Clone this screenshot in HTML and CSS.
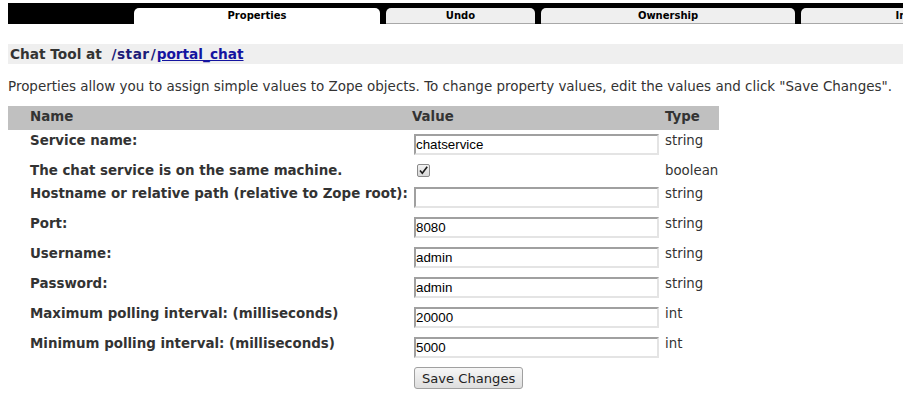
FILE: index.html
```html
<!DOCTYPE html>
<html>
<head>
<meta charset="utf-8">
<link rel="stylesheet" href="styles.css">
</head>
<body>
<div class="page">
  <div class="tabbar">
    <div class="tab tab-active tab-props">Properties</div>
    <div class="tab tab-undo">Undo</div>
    <div class="tab tab-own">Ownership</div>
    <div class="tab tab-intf">Interfaces</div>
  </div>

  <div class="location">Chat Tool at&nbsp; <a class="loc-base" href="#">/star</a><span class="loc-sep">/</span><a class="loc-obj" href="#">portal_chat</a></div>

  <p class="intro">Properties allow you to assign simple values to Zope objects. To change property values, edit the values and click "Save Changes".</p>

  <table class="props">
    <colgroup>
      <col class="c-name">
      <col class="c-value">
      <col class="c-type">
    </colgroup>
    <thead>
      <tr class="head">
        <th class="name">Name</th>
        <th class="value">Value</th>
        <th class="type">Type</th>
      </tr>
    </thead>
    <tbody>
      <tr>
        <td class="name">Service name:</td>
        <td class="value"><input class="field" type="text" value="chatservice"></td>
        <td class="type">string</td>
      </tr>
      <tr class="row-check">
        <td class="name">The chat service is on the same machine.</td>
        <td class="value"><span class="check"><svg width="13" height="13" viewBox="0 0 13 13"><defs><linearGradient id="cg" x1="0" y1="0" x2="0" y2="1"><stop offset="0" stop-color="#f4f4f4"/><stop offset="1" stop-color="#d6d6d6"/></linearGradient></defs><rect x="0.5" y="0.5" width="12" height="12" rx="1.5" fill="url(#cg)" stroke="#8a8a8a"/><path d="M3 6.5 L5.3 9.2 L10.2 2.8" fill="none" stroke="#1a1a1a" stroke-width="1.6"/></svg></span></td>
        <td class="type">boolean</td>
      </tr>
      <tr>
        <td class="name">Hostname or relative path (relative to Zope root):</td>
        <td class="value"><input class="field" type="text" value=""></td>
        <td class="type">string</td>
      </tr>
      <tr>
        <td class="name">Port:</td>
        <td class="value"><input class="field" type="text" value="8080"></td>
        <td class="type">string</td>
      </tr>
      <tr>
        <td class="name">Username:</td>
        <td class="value"><input class="field" type="text" value="admin"></td>
        <td class="type">string</td>
      </tr>
      <tr>
        <td class="name">Password:</td>
        <td class="value"><input class="field" type="text" value="admin"></td>
        <td class="type">string</td>
      </tr>
      <tr>
        <td class="name">Maximum polling interval: (milliseconds)</td>
        <td class="value"><input class="field" type="text" value="20000"></td>
        <td class="type">int</td>
      </tr>
      <tr>
        <td class="name">Minimum polling interval: (milliseconds)</td>
        <td class="value"><input class="field" type="text" value="5000"></td>
        <td class="type">int</td>
      </tr>
      <tr class="row-submit">
        <td class="name"></td>
        <td class="value"><button class="save" type="button">Save Changes</button></td>
        <td class="type"></td>
      </tr>
    </tbody>
  </table>
</div>
</body>
</html>
```

FILE: styles.css
```css
html, body {
  margin: 0;
  padding: 0;
  background: #ffffff;
  overflow: hidden;
}

body {
  font-family: "DejaVu Sans", Verdana, sans-serif;
  font-size: 13.33px;
  color: #333333;
}

.page {
  padding: 3px 0 0 8px;
  width: 1100px;
}

/* tabs */
.tabbar {
  display: flex;
  gap: 6px;
  background: #000000;
  padding: 5px 0 0 126px;
  height: 16px;
}

.tab {
  box-sizing: border-box;
  height: 16px;
  background: #efefef;
  border-bottom: 1px solid #a8a8a8;
  border-radius: 5px 5px 0 0;
  font-size: 10px;
  font-weight: bold;
  color: #000000;
  text-align: center;
  line-height: 15px;
}

.tab-active {
  background: #ffffff;
  border-bottom-color: #ffffff;
}

.tab-props { width: 246px; }
.tab-undo { width: 149px; }
.tab-own { width: 254px; }
.tab-intf { width: 246px; }

/* location header */
.location {
  margin-top: 20px;
  height: 20px;
  line-height: 20px;
  background: #efefef;
  padding-left: 2px;
  font-size: 13.7px;
  font-weight: bold;
  color: #333333;
}

.loc-base {
  color: #1c1c78;
  text-decoration: none;
  letter-spacing: 0.5px;
}

.loc-sep {
  color: #1c1c78;
  margin: 0 1px 0 1px;
}

.loc-obj {
  color: #1414a0;
  text-decoration: underline;
}

.intro {
  margin: 14px 0 12px 0;
  line-height: 16px;
  font-size: 13.48px;
}

/* properties table */
.props {
  border-collapse: collapse;
  table-layout: fixed;
  width: 711px;
}

.c-name { width: 402px; }
.c-value { width: 253px; }
.c-type { width: 56px; }

.props th,
.props td {
  padding: 3px 2px 0 2px;
  vertical-align: top;
  text-align: left;
  line-height: 16px;
  white-space: nowrap;
}

.props .head th {
  background: #c0c0c0;
  font-weight: bold;
  padding-top: 3px;
  padding-bottom: 5px;
}

.props .name {
  padding-left: 22px;
  font-weight: bold;
  font-size: 13.4px;
}

.props .head .value {
  padding-left: 2px;
}

.props .type {
  padding-left: 2px;
}

.props td.value {
  padding-top: 2px;
  padding-bottom: 2px;
}

.field {
  display: block;
  box-sizing: border-box;
  width: 245px;
  height: 21px;
  margin: 2px 0 3px 2px;
  padding: 0;
  border-style: solid;
  border-width: 2px;
  border-color: #a0a0a0 #e4e4e4 #e4e4e4 #a0a0a0;
  background: #ffffff;
  font-family: "Liberation Sans", Arial, sans-serif;
  font-size: 13.33px;
  color: #000000;
  outline: none;
}

.props .row-check td.name,
.props .row-check td.type {
  padding-top: 3px;
}

.check {
  display: block;
  width: 13px;
  height: 13px;
  margin: 2px 0 4px 5px;
}

.check svg {
  display: block;
}

.props .row-submit td.value {
  padding-top: 4px;
}

.save {
  display: block;
  box-sizing: border-box;
  height: 22px;
  margin-left: 2px;
  padding: 0 7px;
  border: 1px solid #a0a0a0;
  border-radius: 3px;
  background: linear-gradient(#f6f6f6, #dedede);
  font-family: "DejaVu Sans", Verdana, sans-serif;
  font-size: 13.1px;
  color: #222222;
}
```
